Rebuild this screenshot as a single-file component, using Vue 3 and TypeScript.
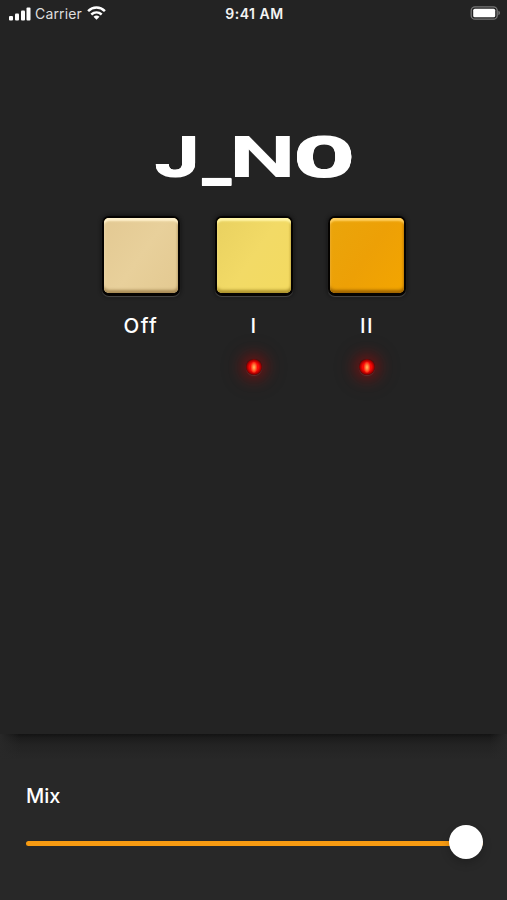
<script setup lang="ts">
import { ref } from 'vue'

interface Mode {
  label: string
  tone: string
  lit: boolean
}

const modes: Mode[] = [
  { label: 'Off', tone: 'cream', lit: false },
  { label: 'I', tone: 'yellow', lit: true },
  { label: 'II', tone: 'orange', lit: true },
]

const mix = ref(100)
</script>

<template>
  <main class="screen">
    <header class="status">
      <div class="network">
        <svg class="signal" width="22" height="14" viewBox="0 0 22 14" fill="#fff">
          <rect x="0" y="9" width="4" height="4.5" rx="1" />
          <rect x="6" y="6.5" width="4" height="7" rx="1" />
          <rect x="12" y="3.5" width="4" height="10" rx="1" />
          <rect x="17.5" y="0.5" width="4" height="13" rx="1" />
        </svg>
        <span class="carrier">Carrier</span>
        <svg class="wifi" width="19" height="14" viewBox="0 0 19 14" fill="none" stroke="#fff" stroke-width="2.5">
          <path d="M1.1 5.1C5.9 .4 13.1 .4 17.9 5.1" />
          <path d="M4.3 8.5C7.4 5.7 11.6 5.7 14.7 8.5" />
          <path d="M6.5 10.7Q9.5 8.4 12.5 10.7L9.5 13.8Z" fill="#fff" stroke="none" />
        </svg>
      </div>
      <span class="time">9:41 AM</span>
      <svg class="battery" width="30" height="14" viewBox="0 0 30 14">
        <rect x="1.2" y=".8" width="26" height="12.4" rx="3.8" fill="none" stroke="#777" stroke-width="1.3" />
        <rect x="3.2" y="2.7" width="22" height="8.6" rx="1.6" fill="#fff" />
        <path d="M28.4 4.8Q30 5.4 30 7T28.4 9.2Z" fill="#777" />
      </svg>
    </header>

    <section class="panel">
      <svg class="logo" width="200" height="56" viewBox="0 0 200 56">
        <text transform="translate(.3 42.4) scale(1.45 1)" class="hook">J</text>
        <text transform="translate(48 44) scale(1.17 1)" class="dash">_</text>
        <text transform="translate(75 43.2) scale(1.66 1)" class="bold">N</text>
        <text transform="translate(138.3 41.9) scale(2 1)" class="mono">O</text>
      </svg>
      <div class="modes">
        <div v-for="mode in modes" :key="mode.label" class="mode">
          <button class="key" :aria-label="mode.label"><span class="cap" :class="mode.tone"></span></button>
          <span class="label">{{ mode.label }}</span>
          <span v-if="mode.lit" class="led"></span>
        </div>
      </div>
    </section>

    <footer class="mixer">
      <span class="mix">Mix</span>
      <div class="slider">
        <div class="track" :style="{ width: mix + '%' }"></div>
        <div class="knob"></div>
      </div>
    </footer>
  </main>
</template>

<style>
body {
  margin: 0;
  background: #232323;
}
</style>

<style scoped>
.screen {
  width: 507px;
  height: 900px;
  display: flex;
  flex-direction: column;
  overflow: hidden;
  background: #232323;
  color: #fff;
  font-family: Inter, 'Liberation Sans', sans-serif;
}
.status {
  box-sizing: border-box;
  height: 27px;
  padding: 0 7px 0 9px;
  display: grid;
  grid-template-columns: 1fr auto 1fr;
  align-items: center;
  line-height: 27px;
}
.network {
  display: flex;
  align-items: center;
}
.signal {
  flex: none;
}
.carrier {
  margin-left: 4px;
  width: 47px;
  font-size: 14px;
  letter-spacing: 0.15px;
  color: #dedede;
}
.wifi {
  margin-left: 5px;
  position: relative;
  top: -1px;
}
.time {
  font-size: 14px;
  font-weight: 600;
  letter-spacing: 0.5px;
  color: #f4f4f4;
}
.battery {
  justify-self: end;
  position: relative;
  top: -0.5px;
}
.panel {
  flex: 1;
  display: flex;
  flex-direction: column;
  align-items: center;
}
.logo {
  margin-top: 107px;
  overflow: visible;
  fill: #fff;
  font-family: Roboto, sans-serif;
  font-size: 57px;
  font-weight: 900;
}
.mono {
  font-family: 'DejaVu Sans Mono', monospace;
  font-size: 53px;
  font-weight: 700;
  text-shadow: 0 1px #fff, 0 -1px #fff;
}
.hook {
  font-size: 56px;
  font-weight: 800;
  text-shadow: 0 -0.7px #fff, 0 0.7px #fff;
}
.bold {
  font-weight: 700;
}
.dash {
  text-shadow: 0 1px #fff;
}
.modes {
  display: flex;
  gap: 35px;
  margin-top: 26px;
}
.mode {
  width: 78px;
  display: flex;
  flex-direction: column;
  align-items: center;
}
.key {
  box-sizing: border-box;
  width: 78px;
  height: 80px;
  padding: 2px 2px 3px;
  border: 0;
  border-radius: 7px;
  background: #050301;
  box-shadow: 0 1px 1px #484848, 0 0 4px #0b0b0b;
}
.cap {
  display: block;
  width: 100%;
  height: 100%;
  border-radius: 5px;
}
.cream {
  background: linear-gradient(125deg, #e3c993, #e8d09b 50%, #e3c991);
  box-shadow: inset 0 4px 2px -1px #fff2cd, inset 0 -4px 3px -1px #a88b56, inset 2px 0 2px -1px #f4dfb2, inset -2px 0 2px -1px #c3a873;
}
.yellow {
  background: linear-gradient(125deg, #e9d160, #f2da66 50%, #f3da60);
  box-shadow: inset 0 4px 2px -1px #fff5a6, inset 0 -4px 3px -1px #ae942e, inset 2px 0 2px -1px #fae686, inset -2px 0 2px -1px #ccb247;
}
.orange {
  background: linear-gradient(125deg, #eaa50b, #eda006 50%, #f3a500);
  box-shadow: inset 0 4px 2px -1px #ffd060, inset 0 -4px 3px -1px #9f6500, inset 2px 0 2px -1px #fab62c, inset -2px 0 2px -1px #c47d00;
}
.label {
  margin-top: 18px;
  height: 24px;
  line-height: 24px;
  font-size: 20.5px;
  font-weight: 500;
  letter-spacing: 1.4px;
  text-indent: 0.9px;
}
.led {
  width: 16px;
  height: 16px;
  margin: 21px 0 0 1px;
  border-radius: 50%;
  background:
    radial-gradient(ellipse 3.5px 6px at 50% 52%, #ffc264 0, #ff8a42 35%, rgba(255, 60, 20, 0) 100%),
    radial-gradient(circle, #ff1a0a 0, #fa0805 40%, #a80000 60%, #4b0504 75%);
  box-shadow: 0 1px 1px #643030, 0 0 14px 4px rgba(200, 0, 0, 0.42), 0 0 26px 5px rgba(150, 0, 0, 0.15);
}
.mixer {
  box-sizing: border-box;
  height: 166px;
  padding: 49px 24px 0 26px;
  background:
    linear-gradient(90deg, #282828, transparent 20px, transparent 490px, #282828) top / 100% 26px no-repeat,
    linear-gradient(#131313, #1c1c1c 4px, #232323 11px, #282828 26px);
}
.mix {
  display: block;
  height: 26px;
  line-height: 26px;
  font-size: 20px;
  font-weight: 500;
}
.slider {
  height: 34px;
  margin-top: 16px;
  display: flex;
  align-items: center;
}
.track {
  height: 5px;
  margin-top: 2px;
  border-radius: 3px;
  background: #f79b12;
}
.knob {
  flex: none;
  width: 34px;
  height: 34px;
  margin-left: -34px;
  border-radius: 50%;
  background: #fff;
  box-shadow: 0 4px 10px rgba(0, 0, 0, 0.2);
}
</style>
